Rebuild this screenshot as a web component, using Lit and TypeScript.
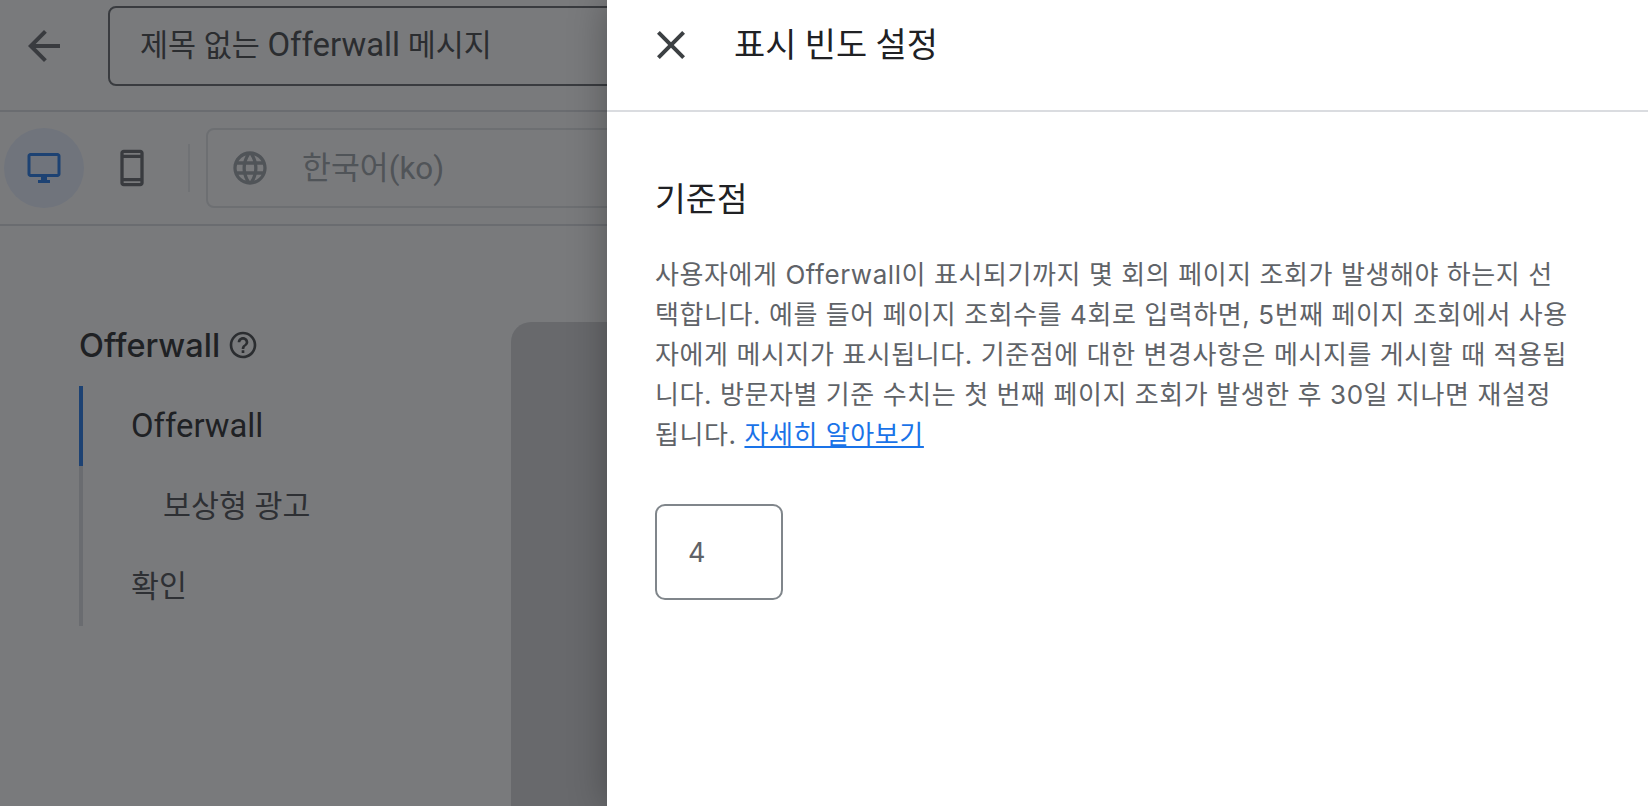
import { LitElement, html, css } from "lit";
import { customElement } from "lit/decorators.js";

const P = {
  back: "M20 11H7.83l5.59-5.59L12 4l-8 8 8 8 1.41-1.41L7.83 13H20v-2z",
  close: "M19 6.41L17.59 5 12 10.59 6.41 5 5 6.41 10.59 12 5 17.59 6.41 19 12 13.41 17.59 19 19 17.59 13.41 12z",
  desktop: "M21 2H3c-1.1 0-2 .9-2 2v12c0 1.1.9 2 2 2h7v2H8v2h8v-2h-2v-2h7c1.1 0 2-.9 2-2V4c0-1.1-.9-2-2-2zm0 14H3V4h18v12z",
  phone: "M17 1.01L7 1c-1.1 0-1.99.9-1.99 2v18c0 1.1.89 2 1.99 2h10c1.1 0 2-.9 2-2V3c0-1.1-.9-1.99-2-1.99zM17 21H7v-1h10v1zm0-3H7V6h10v12zM7 4V3h10v1H7z",
  globe: "M11.99 2C6.47 2 2 6.48 2 12s4.47 10 9.99 10C17.52 22 22 17.52 22 12S17.52 2 11.99 2zm6.93 6h-2.95c-.32-1.25-.78-2.45-1.38-3.56 1.84.63 3.37 1.91 4.33 3.56zM12 4.04c.83 1.2 1.48 2.53 1.91 3.96h-3.82c.43-1.43 1.08-2.76 1.91-3.96zM4.26 14C4.1 13.36 4 12.69 4 12s.1-1.36.26-2h3.38c-.08.66-.14 1.32-.14 2 0 .68.06 1.34.14 2H4.26zm.82 2h2.95c.32 1.25.78 2.45 1.38 3.56-1.84-.63-3.37-1.9-4.33-3.56zm2.95-8H5.08c.96-1.66 2.49-2.93 4.33-3.56C8.81 5.55 8.35 6.75 8.03 8zM12 19.96c-.83-1.2-1.48-2.53-1.91-3.96h3.82c-.43 1.43-1.08 2.76-1.91 3.96zM14.34 14H9.66c-.09-.66-.16-1.32-.16-2 0-.68.07-1.35.16-2h4.68c.09.65.16 1.32.16 2 0 .68-.07 1.34-.16 2zm.25 5.56c.6-1.11 1.06-2.31 1.38-3.56h2.95c-.96 1.65-2.49 2.93-4.33 3.56zM16.36 14c.08-.66.14-1.32.14-2 0-.68-.06-1.34-.14-2h3.38c.16.64.26 1.31.26 2s-.1 1.36-.26 2h-3.38z",
  help: "M11 18h2v-2h-2v2zm1-16C6.48 2 2 6.48 2 12s4.48 10 10 10 10-4.48 10-10S17.52 2 12 2zm0 18c-4.41 0-8-3.59-8-8s3.59-8 8-8 8 3.59 8 8-3.59 8-8 8zm0-14c-2.21 0-4 1.79-4 4h2c0-1.1.9-2 2-2s2 .9 2 2c0 2-3 1.75-3 5h2c0-2.25 3-2.5 3-5 0-2.21-1.79-4-4-4z",
};

const icon = (d: string, cls: string) =>
  html`<svg class=${cls} viewBox="0 0 24 24" aria-hidden="true"><path d=${d}></path></svg>`;

@customElement("app-root")
export class AppRoot extends LitElement {
  static styles = css`
    :host {
      display: block;
      position: relative;
      width: 1648px;
      height: 806px;
      overflow: hidden;
      background: #fff;
      font-family: Roboto, "Noto Sans CJK KR", sans-serif;
      color: #202124;
    }
    svg { display: block; fill: currentColor; flex: none; }
    .lat { font-size: 1.08em; }

    .page { height: 806px; display: flex; flex-direction: column; }

    .topbar {
      height: 112px;
      flex: none;
      box-sizing: border-box;
      border-bottom: 2px solid #dadce0;
      display: flex;
      align-items: flex-start;
      padding: 6px 0 0 20px;
    }
    .i-back { width: 48px; height: 48px; margin: 16px 40px 0 0; color: #5f6368; }
    .name {
      width: 700px;
      height: 80px;
      box-sizing: border-box;
      border: 2px solid #5f6368;
      border-radius: 8px;
      padding-left: 30px;
      font-size: 30.5px;
      line-height: 74px;
      white-space: nowrap;
      color: #3c4043;
    }

    .toolbar {
      height: 114px;
      flex: none;
      box-sizing: border-box;
      border-bottom: 2px solid #dadce0;
      display: flex;
      align-items: flex-start;
      padding: 16px 0 0 4px;
    }
    .device {
      width: 80px;
      height: 80px;
      border-radius: 50%;
      display: flex;
      align-items: center;
      justify-content: center;
      color: #5f6368;
    }
    .device.on { background: #e8f0fe; color: #1a73e8; }
    .i-desktop { width: 36px; height: 36px; }
    .i-phone { width: 40px; height: 40px; }
    .phone { margin-left: 8px; }
    .vr { width: 2px; height: 48px; background: #e8eaed; margin: 16px 16px 0 16px; }
    .lang {
      width: 700px;
      height: 80px;
      box-sizing: border-box;
      border: 2px solid #e0e3e7;
      border-radius: 8px;
      display: flex;
      align-items: center;
      padding-left: 22px;
      color: #9aa0a6;
      font-size: 31.4px;
      white-space: nowrap;
    }
    .lang span { padding-bottom: 6px; }
    .i-globe { width: 40px; height: 40px; margin-right: 32px; }

    .main { flex: 1; display: flex; min-height: 0; }
    .side { width: 511px; flex: none; padding: 97px 0 0 79px; box-sizing: border-box; }
    .side-h {
      display: flex;
      align-items: center;
      height: 44px;
      font-family: Inter, "Noto Sans CJK KR", sans-serif;
      font-size: 32.5px;
      font-weight: 500;
      color: #202124;
      margin-bottom: 19px;
    }
    .i-help { width: 32px; height: 32px; margin-left: 7px; color: #3c4043; }
    .nav { display: flex; flex-direction: column; }
    .nav div {
      height: 80px;
      box-sizing: border-box;
      border-left: 4px solid #dadce0;
      padding: 0 0 4px 48px;
      display: flex;
      align-items: center;
      font-size: 30.4px;
      color: #45484c;
    }
    .nav .on { border-left-color: #1a73e8; color: #202124; padding-bottom: 0; }
    .nav .sub { padding-left: 80px; }

    .card {
      flex: 1;
      margin-top: 96px;
      background: #d4d5d8;
      border-radius: 20px 0 0 0;
    }

    .scrim { position: absolute; inset: 0; background: rgba(32, 33, 36, 0.6); }

    .panel {
      position: absolute;
      top: 0;
      right: 0;
      bottom: 0;
      width: 1041px;
      background: #fff;
      box-shadow: 0 0 36px rgba(0, 0, 0, 0.3);
      display: flex;
      flex-direction: column;
    }
    .p-head {
      height: 112px;
      flex: none;
      box-sizing: border-box;
      border-bottom: 2px solid #dadce0;
      display: flex;
      align-items: center;
      padding-left: 40px;
    }
    .i-close { width: 48px; height: 48px; color: #3c4043; margin: -20px 39px 0 0; }
    .p-title { font-size: 33.9px; line-height: 48px; margin-top: -18px; color: #202124; }
    .p-body { padding: 64px 0 0 48px; }
    .p-h { font-size: 33.5px; line-height: 48px; color: #202124; margin: 0 0 31px; font-weight: 400; }
    .p-text {
      width: 915px;
      margin: 0;
      font-family: Inter, "Noto Sans CJK KR", sans-serif;
      font-size: 26px;
      line-height: 40px;
      letter-spacing: 0.58px;
      color: #5f6368;
    }
    .p-text a { color: #1a73e8; text-decoration: underline; }
    .num {
      margin-top: 49px;
      width: 128px;
      height: 96px;
      box-sizing: border-box;
      border: 2px solid #80868b;
      border-radius: 10px;
      padding-left: 31px;
      display: flex;
      align-items: center;
      font-family: Inter, sans-serif;
      font-size: 27px;
      color: #5f6368;
    }
  `;

  render() {
    return html`
      <div class="page">
        <div class="topbar">
          ${icon(P.back, "i-back")}
          <div class="name">제목 없는 <span class="lat">Offerwall</span> 메시지</div>
        </div>
        <div class="toolbar">
          <div class="device on">${icon(P.desktop, "i-desktop")}</div>
          <div class="device phone">${icon(P.phone, "i-phone")}</div>
          <div class="vr"></div>
          <div class="lang">${icon(P.globe, "i-globe")}<span>한국어(ko)</span></div>
        </div>
        <div class="main">
          <div class="side">
            <div class="side-h">Offerwall${icon(P.help, "i-help")}</div>
            <div class="nav">
              <div class="on"><span class="lat">Offerwall</span></div>
              <div class="sub">보상형 광고</div>
              <div>확인</div>
            </div>
          </div>
          <div class="card"></div>
        </div>
      </div>
      <div class="scrim"></div>
      <aside class="panel">
        <div class="p-head">
          ${icon(P.close, "i-close")}
          <div class="p-title">표시 빈도 설정</div>
        </div>
        <div class="p-body">
          <h2 class="p-h">기준점</h2>
          <p class="p-text">사용자에게 Offerwall이 표시되기까지 몇 회의 페이지 조회가 발생해야 하는지 선택합니다. 예를 들어 페이지 조회수를 4회로 입력하면, 5번째 페이지 조회에서 사용자에게 메시지가 표시됩니다. 기준점에 대한 변경사항은 메시지를 게시할 때 적용됩니다. 방문자별 기준 수치는 첫 번째 페이지 조회가 발생한 후 30일 지나면 재설정됩니다. <a href="#">자세히 알아보기</a></p>
          <div class="num">4</div>
        </div>
      </aside>
    `;
  }
}
